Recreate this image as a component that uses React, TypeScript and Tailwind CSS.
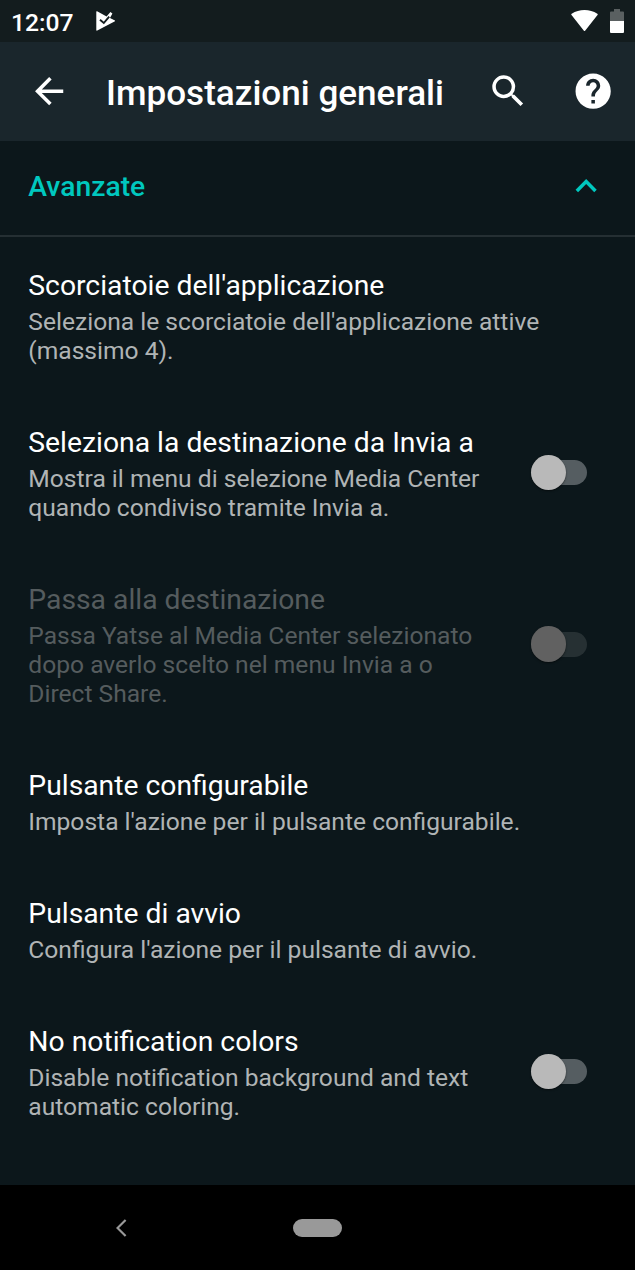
import { MdArrowBack, MdExpandLess, MdHelp, MdSearch } from "react-icons/md";
import clsx from "clsx";

type Setting = {
  title: string;
  summary: string[];
  toggle?: boolean;
  disabled?: boolean;
};

const SETTINGS: Setting[] = [
  {
    title: "Scorciatoie dell'applicazione",
    summary: ["Seleziona le scorciatoie dell'applicazione attive", "(massimo 4)."],
  },
  {
    title: "Seleziona la destinazione da Invia a",
    summary: ["Mostra il menu di selezione Media Center", "quando condiviso tramite Invia a."],
    toggle: true,
  },
  {
    title: "Passa alla destinazione",
    summary: [
      "Passa Yatse al Media Center selezionato",
      "dopo averlo scelto nel menu Invia a o",
      "Direct Share.",
    ],
    toggle: true,
    disabled: true,
  },
  {
    title: "Pulsante configurabile",
    summary: ["Imposta l'azione per il pulsante configurabile."],
  },
  {
    title: "Pulsante di avvio",
    summary: ["Configura l'azione per il pulsante di avvio."],
  },
  {
    title: "No notification colors",
    summary: ["Disable notification background and text", "automatic coloring."],
    toggle: true,
  },
];

function StatusBar() {
  return (
    <div className="flex h-[42px] items-center bg-[#131c1e] pl-[11px] pr-[11px] text-white">
      <span className="mt-0.5 w-[85px] text-[24.7px] font-medium leading-[29px]">12:07</span>
      <svg className="h-5 w-5" viewBox="0 0 20 20">
        <path
          d="M.3.8Q.3-.1 1.1.3L10.6 5.4 14.4.9 16.4 2.4 14 6.9 18.5 9.2Q19.6 9.9 18.5 10.6L1.3 19.6Q.3 20 .3 19Z"
          fill="currentColor"
        />
        <path d="M4 8.8 7.8 12 13.2 5.6" fill="none" stroke="#131c1e" strokeWidth="1.9" />
      </svg>
      <svg className="ml-auto h-[22px] w-[27px]" viewBox="0 0 27 22">
        <path
          d="M.5 5.1Q-.1 4.4.7 3.8Q6.5.1 13.5.1T26.3 3.8Q27.1 4.4 26.5 5.1L14.1 20.7Q13.5 21.4 12.9 20.7Z"
          fill="currentColor"
        />
      </svg>
      <svg className="ml-3 h-6 w-[14px]" viewBox="0 0 14 24">
        <path d="M4 0H10V2.6H13Q14 2.6 14 3.6V12H0V3.6Q0 2.6 1 2.6H4Z" fill="#5a6061" />
        <path d="M0 12H14V22.8Q14 24 13 24H1Q0 24 0 22.8Z" fill="currentColor" />
      </svg>
    </div>
  );
}

function Toolbar() {
  return (
    <header className="flex h-[99px] items-center bg-[#1a262c] pl-[28px] pr-[21px] text-white">
      <MdArrowBack className="size-[42.3px]" />
      <h1 className="ml-[35.7px] mt-[3px] whitespace-nowrap text-[35.1px] font-medium leading-[41px]">
        Impostazioni generali
      </h1>
      <MdSearch className="ml-auto size-[42.3px]" />
      <MdHelp className="ml-[42.5px] size-[42.3px]" />
    </header>
  );
}

function Switch({ disabled }: { disabled?: boolean }) {
  return (
    <div
      role="switch"
      aria-checked={false}
      className={clsx(
        "mr-12 flex h-[25px] w-[56px] items-center rounded-full",
        disabled ? "bg-[#263033]" : "bg-[#555d61]",
      )}
    >
      <div
        className={clsx(
          "-ml-[0.5px] size-[35.5px] shrink-0 rounded-full shadow-[0_1px_2px_rgba(0,0,0,0.5)]",
          disabled ? "bg-[#616161]" : "bg-[#b9b9b9]",
        )}
      />
    </div>
  );
}

function SettingRow({ title, summary, toggle, disabled }: Setting) {
  return (
    <div className="flex items-center justify-between whitespace-nowrap pl-[28.3px]">
      <div className="pb-[29px] pt-8">
        <div className={clsx("text-[28.3px] leading-[33px]", disabled ? "text-[#555c5e]" : "text-white")}>
          {title}
        </div>
        <div className={clsx("mt-[5px] text-[24.6px] leading-[29px]", disabled ? "text-[#555c5e]" : "text-[#b0b4b5]")}>
          {summary.map((line) => (
            <div key={line}>{line}</div>
          ))}
        </div>
      </div>
      {toggle && <Switch disabled={disabled} />}
    </div>
  );
}

export default function App() {
  return (
    <div className="flex h-[1270px] w-[635px] flex-col overflow-hidden bg-[#0c171b] font-[Roboto,sans-serif]">
      <StatusBar />
      <Toolbar />
      <div className="flex h-24 shrink-0 items-center justify-between border-b-2 border-[#252f33] pb-[3px] pl-[28.3px] pr-7 text-[#00c8bf]">
        <span className="text-[28.3px] font-medium leading-[33px]">Avanzate</span>
        <MdExpandLess className="size-[42.3px]" />
      </div>
      <main className="flex-1">
        {SETTINGS.map((s) => (
          <SettingRow key={s.title} {...s} />
        ))}
      </main>
      <nav className="flex h-[85px] shrink-0 items-center bg-black pl-[116px]">
        <svg className="h-[18px] w-[11px]" viewBox="0 0 11 18">
          <path d="M9.6 1 1.5 9 9.6 17" fill="none" stroke="#999" strokeWidth="2.2" />
        </svg>
        <div className="ml-[165.5px] h-[18px] w-[49.5px] rounded-full bg-[#999]" />
      </nav>
    </div>
  );
}
